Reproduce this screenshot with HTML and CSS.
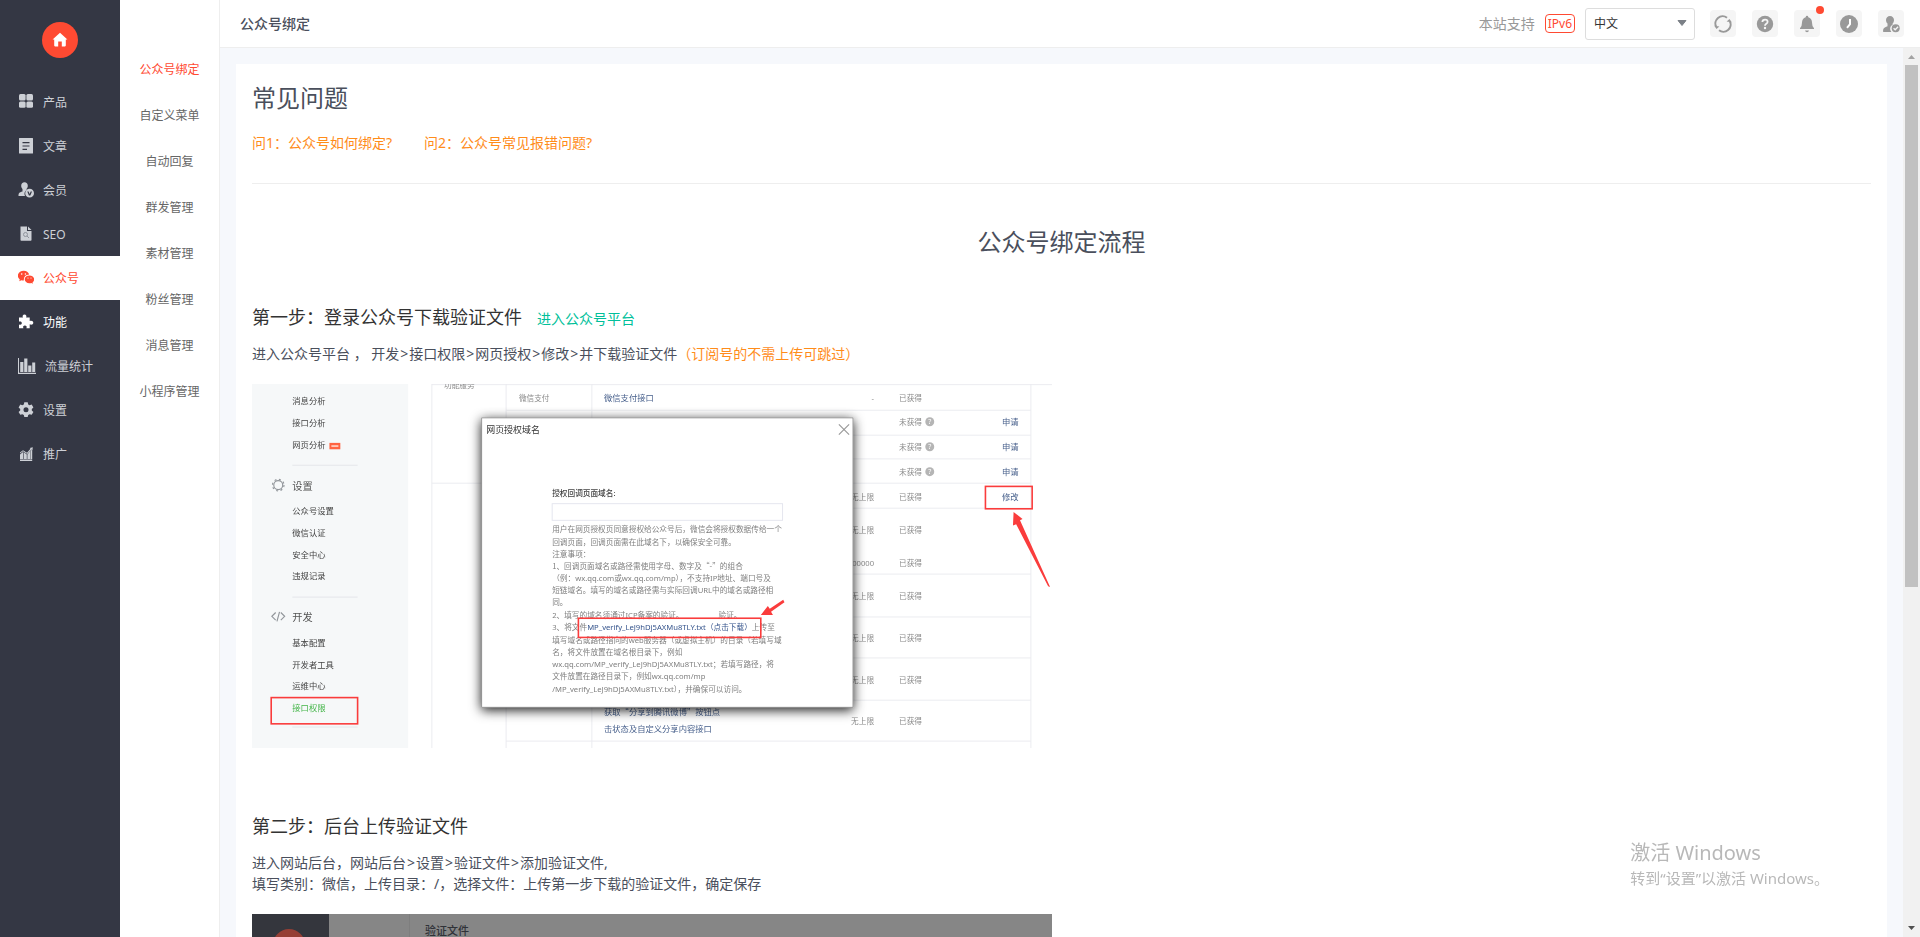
FILE: index.html
```html
<!DOCTYPE html>
<html lang="zh-CN">
<head>
<meta charset="utf-8">
<title>公众号绑定</title>
<link rel="stylesheet" href="styles.css">
</head>
<body>
<div class="app">
  <nav class="sidebar" aria-label="主导航">
    <a class="home" href="#" aria-label="首页">
      <svg width="16" height="16" viewBox="0 0 16 16" fill="currentColor"><path d="M8 .8 15.4 7.600H13.800V13.600q0 .8-.8.8H9.800V9.600H6.200V14.400H3q-.8 0-.8-.8V7.600H.6z"/></svg>
    </a>
    <ul class="menu">
      <li><a class="menu-item" href="#"><svg class="menu-icon" viewBox="0 0 16 16" fill="currentColor"><rect x="1" y="0" width="6.600" height="6.400" rx="1.500"/><rect x="8.400" y="0" width="6.600" height="6.400" rx="1.500"/><rect x="1" y="7.400" width="6.600" height="6.400" rx="1.500"/><rect x="8.400" y="7.400" width="6.600" height="6.400" rx="1.500"/></svg><span>产品</span></a></li>
      <li><a class="menu-item" href="#"><svg class="menu-icon" viewBox="0 0 16 16" fill="currentColor"><path fill-rule="evenodd" d="M1.500 0h13q.5 0 .5.500v14.500q0 .5-.5.500h-13q-.5 0-.5-.5V.5q0-.5.500-.5zM4.500 4v1.200h7V4zM4.500 7.400v1.200h7V7.400zM4.500 10.800V12h4.500v-1.200z"/></svg><span>文章</span></a></li>
      <li><a class="menu-item" href="#"><svg class="menu-icon" viewBox="0 0 16 16" fill="currentColor"><path d="M6.500.2c2 0 3.300 1.500 3.300 3.500 0 1.300-.5 2.200-1.200 3v1.200A5 5 0 0 0 7 14H.5c0-3 .6-3.600 4-4.500V6.900C3.700 6 3.200 5 3.200 3.700 3.200 1.700 4.500.2 6.500.2z"/><path fill-rule="evenodd" d="M11.600 6.800a4.400 4.400 0 1 1 0 8.800 4.400 4.400 0 0 1 0-8.800zM9.300 9.400l1.600 4h1.400l1.700-4h-1.300l-1.100 2.700-1-2.700z"/></svg><span>会员</span></a></li>
      <li><a class="menu-item" href="#"><svg class="menu-icon" viewBox="0 0 16 16"><path fill="currentColor" d="M2.500.500h6.500v4.500h4.500V14q0 .8-.8.800H3.300q-.8 0-.8-.8z"/><path fill="currentColor" d="M10 .500 13.500 4h-3.500z"/><circle cx="7.500" cy="8.500" r="2" fill="none" stroke="#8f939c"/><path d="m9 10 2 2" stroke="#8f939c"/></svg><span>SEO</span></a></li>
      <li><a class="menu-item is-current" href="#" aria-current="page"><svg class="menu-icon" viewBox="0 0 16 16"><path fill="currentColor" d="M5.800.8C2.400.8-.2 2.900-.2 5.700c0 1.500.8 2.800 2 3.700l-.6 1.900 2.200-1.100q1.100.4 2.400.4Q5.500 5 11.200 4.600C10.500 2.400 8.400.8 5.800.8z"/><path fill="currentColor" d="M11.500 5.400c-2.800 0-4.800 1.700-4.800 3.900s2 4 4.800 4q1 0 1.800-.3l1.600.8-.4-1.400c1.100-.8 1.700-1.900 1.700-3.100 0-2.200-2-3.900-4.700-3.900z"/><circle cx="3.700" cy="4" r=".8" fill="#fff"/><circle cx="7.400" cy="4" r=".8" fill="#fff"/><circle cx="10" cy="8" r=".6" fill="#fff"/><circle cx="13" cy="8" r=".6" fill="#fff"/></svg><span>公众号</span></a></li>
      <li><a class="menu-item is-bright" href="#"><svg class="menu-icon" viewBox="0 0 16 16" fill="currentColor"><path d="M5 3.600C4 1.900 5 .5 6.500.5S9 1.900 8.100 3.600h3.600v3.500c1.800-1 3.600 0 3.600 1.600s-1.800 2.600-3.600 1.600v4H8.400c.8-1.800 0-2.800-1.500-2.800s-2.300 1-1.500 2.800H1V10.500c1.800.7 2.800 0 2.800-1.400S2.800 7 1 7.600v-4z"/></svg><span>功能</span></a></li>
      <li><a class="menu-item" href="#"><svg class="menu-icon is-wide" viewBox="0 0 18 16" fill="currentColor"><path d="M0 0h1v14.800h17V16H0z"/><path d="M2.200 4h3.200v10H2.200zM6.200.6h3.200V14H6.200zM10.200 7.500h3.200V14h-3.200zM14.200 4.600h3V14h-3z"/></svg><span>流量统计</span></a></li>
      <li><a class="menu-item" href="#"><svg class="menu-icon" viewBox="0 0 16 16" fill="currentColor"><path fill-rule="evenodd" d="M6.300.300h3.400l.5 2.100 1.400.8 2.100-.6 1.700 2.900L13.800 7v1.400l1.600 1.500-1.700 2.900-2.100-.6-1.400.8-.5 2.100H6.300l-.5-2.100-1.400-.8-2.100.6L.6 9.900 2.200 8.400V7L.6 5.500l1.700-2.900 2.100.6 1.400-.8zM8 5.200a2.500 2.500 0 1 0 0 5 2.500 2.500 0 0 0 0-5z"/></svg><span>设置</span></a></li>
      <li><a class="menu-item" href="#"><svg class="menu-icon" viewBox="0 0 16 16" fill="currentColor"><path d="M2 8.500 5 6v7H2zM5.600 6 8.800 8.500V13H5.600zM9.400 8.500 12.600 4.500V13H9.400zM13 4.500l1.200-1V13H13zM2 13.600h12.200V15H2z"/><path d="m2 6.500 3-2.200 4 2.500L12.500 2.800 11.800 2l3-.8-.4 3-.9-.7L9.300 8 5 5.300 2 7.400z"/></svg><span>推广</span></a></li>
    </ul>
  </nav>

  <nav class="submenu" aria-label="公众号">
    <a class="submenu-item is-current" href="#" aria-current="page">公众号绑定</a>
    <a class="submenu-item" href="#">自定义菜单</a>
    <a class="submenu-item" href="#">自动回复</a>
    <a class="submenu-item" href="#">群发管理</a>
    <a class="submenu-item" href="#">素材管理</a>
    <a class="submenu-item" href="#">粉丝管理</a>
    <a class="submenu-item" href="#">消息管理</a>
    <a class="submenu-item" href="#">小程序管理</a>
  </nav>

  <div class="main">
    <header class="topbar">
      <h1 class="page-title">公众号绑定</h1>
      <div class="tools">
        <span class="support">本站支持</span>
        <span class="ipv6">IPv6</span>
        <div class="lang">
          <select class="lang-select" aria-label="语言"><option>中文</option></select>
          <svg class="lang-arrow" width="10" height="6" viewBox="0 0 10 6"><path d="M1 .5h8L5 5.500z" fill="#7b8087" stroke="#7b8087" stroke-linejoin="round"/></svg>
        </div>
        <div class="buttons">
          <button class="tool" type="button" aria-label="刷新"><svg width="18" height="18" viewBox="0 0 18 18" fill="none" stroke="currentColor" stroke-width="2"><path d="M13 2.800A7.200 7.200 0 0 0 2.200 11.800M5 15.200A7.200 7.200 0 0 0 15.800 6.200"/><path d="M.3 10.800 2.500 14 5.400 11.600zM17.700 7.200 15.500 4 12.600 6.400z" fill="currentColor" stroke="none"/></svg></button>
          <button class="tool" type="button" aria-label="帮助"><svg width="18" height="18" viewBox="0 0 18 18"><circle cx="9" cy="9" r="8.200" fill="currentColor"/><path d="M6.400 7q0-2.400 2.700-2.400 2.500 0 2.500 2.200 0 1.200-1.300 2T9 10.700" fill="none" stroke="#f5f5f5" stroke-width="1.800"/><circle cx="9" cy="13" r="1.200" fill="#f5f5f5"/></svg></button>
          <button class="tool" type="button" aria-label="通知"><svg width="18" height="18" viewBox="0 0 18 18" fill="currentColor"><path d="M9 .8q1.200 0 1.300 1.400Q14 3.400 14 7.500q0 4.200 2 5.700v.8H2v-.8q2-1.500 2-5.700 0-4.100 3.700-5.300Q7.800.8 9 .8zM7 15.400h4q-.4 1.800-2 1.800t-2-1.800z"/></svg><span class="dot"></span></button>
          <button class="tool" type="button" aria-label="历史"><svg width="18" height="18" viewBox="0 0 18 18"><circle cx="9" cy="9" r="9" fill="currentColor"/><path d="M10 4v5.200L7 12.800" fill="none" stroke="#fff" stroke-width="2"/></svg></button>
          <button class="tool" type="button" aria-label="账户"><svg width="18" height="18" viewBox="0 0 18 18"><path fill="currentColor" d="M8 1c2.400 0 4 1.700 4 4 0 1.600-.6 2.700-1.400 3.600v1.100A4.600 4.600 0 0 0 9.400 17H1.200c-.5-3.700.8-4.600 4.300-5.800V8.600C4.600 7.700 4 6.600 4 5c0-2.300 1.600-4 4-4z"/><circle cx="13.700" cy="13.200" r="4" fill="currentColor"/><path d="m11.600 13.200 1.600 1.600 2.900-3" fill="none" stroke="#f5f5f5" stroke-width="1.300"/></svg></button>
        </div>
      </div>
    </header>

    <div class="viewport">
      <main class="scroll-area">
        <section class="card">
          <h2 class="faq-title">常见问题</h2>
          <div class="faq-links">
            <a href="#">问1：公众号如何绑定?</a>
            <a href="#">问2：公众号常见报错问题?</a>
          </div>
          <hr class="rule">
          <h2 class="flow-title">公众号绑定流程</h2>

          <h3 class="step-title"><span>第一步：登录公众号下载验证文件</span><a href="#">进入公众号平台</a></h3>
          <p class="step-text">进入公众号平台 ， 开发<span class="sep">&gt;</span>接口权限<span class="sep">&gt;</span>网页授权<span class="sep">&gt;</span>修改<span class="sep">&gt;</span>并下载验证文件<span class="note">（订阅号的不需上传可跳过）</span></p>
          <svg class="figure is-soft" viewBox="0 0 1250 569" role="img" aria-label="接口权限页面示例">
            <defs><filter id="shade" x="-10%" y="-10%" width="120%" height="125%"><feDropShadow dx="0" dy="4" stdDeviation="9" flood-color="#000" flood-opacity=".9"/></filter></defs>
            <rect width="1250" height="569" fill="#fff"/>
            <rect width="244" height="569" fill="#f6f8f9"/>
            <g stroke="#e4e6e9" stroke-width="1.500"><path d="M63 127h102M63 333h102M63 536h102"/></g>
            <g class="fig-nav">
              <text x="63" y="32">消息分析</text><text x="63" y="66">接口分析</text><text x="63" y="100">网页分析</text>
              <text x="63" y="203">公众号设置</text><text x="63" y="238">微信认证</text><text x="63" y="272">安全中心</text><text x="63" y="305">违规记录</text>
              <text x="63" y="410">基本配置</text><text x="63" y="444">开发者工具</text><text x="63" y="477">运维中心</text><text class="fig-green" x="63" y="511">接口权限</text>
            </g>
            <rect x="121" y="92" width="17" height="10" fill="#ff6240"/><path d="M124 97h11" stroke="#ffc5b6" stroke-width="3"/>
            <g class="fig-head"><text x="63" y="165">设置</text><text x="63" y="370">开发</text></g>
            <g fill="none" stroke="#92969b" stroke-width="1.800"><circle cx="41" cy="158" r="7"/><circle cx="41" cy="158" r="9" stroke-dasharray="3 4.070"/><path d="m37 357-6 6 6 6M45 357l6 6-6 6M43 356l-4 15"/></g>
            <g fill="none" stroke="#eaebef" stroke-width="1.500">
              <path d="M281 1h969M281 0v569M397 0v569M531 0v569M1217 0v569M281 155h116"/>
              <path d="M397 41h820M531 80h686M531 117h686M531 155h686M531 194h686M531 297h686M531 364h686M531 428h686M397 494h820M397 558h820"/>
            </g>
            <g class="fig-grey">
              <text x="300" y="7">功能服务</text><text x="417" y="26">微信支付</text>
              <text x="968" y="26">-</text>
              <text x="1011" y="26">已获得</text><text x="1011" y="64">未获得</text><text x="1011" y="103">未获得</text><text x="1011" y="142">未获得</text><text x="1011" y="181">已获得</text><text x="1011" y="233">已获得</text><text x="1011" y="284">已获得</text><text x="1011" y="336">已获得</text><text x="1011" y="402">已获得</text><text x="1011" y="467">已获得</text><text x="1011" y="532">已获得</text>
            </g>
            <g class="fig-grey" text-anchor="end"><text x="972" y="181">无上限</text><text x="972" y="233">无上限</text><text x="972" y="284">1000000</text><text x="972" y="336">无上限</text><text x="972" y="402">无上限</text><text x="972" y="467">无上限</text><text x="972" y="532">无上限</text></g>
            <g fill="#b5b5b5"><circle cx="1059" cy="59" r="7"/><circle cx="1059" cy="98" r="7"/><circle cx="1059" cy="137" r="7"/></g>
            <g class="fig-mark" text-anchor="middle"><text x="1059" y="63">?</text><text x="1059" y="102">?</text><text x="1059" y="141">?</text></g>
            <g class="fig-blue">
              <text x="550" y="26">微信支付接口</text><text x="1172" y="64">申请</text><text x="1172" y="103">申请</text><text x="1172" y="142">申请</text><text x="1172" y="181">修改</text>
              <text class="fig-cjk" x="550" y="517">获取“分享到腾讯微博”按钮点</text><text x="550" y="544">击状态及自定义分享内容接口</text>
            </g>
            <rect x="359" y="53" width="580" height="452" fill="#fff" stroke="#777" filter="url(#shade)"/>
            <text class="fig-title" x="366" y="76">网页授权域名</text>
            <path d="m917 63 16 16M933 63l-16 16" stroke="#999" stroke-width="1.800"/>
            <text class="fig-label" x="469" y="175">授权回调页面域名:</text>
            <rect x="469" y="187" width="360" height="26" fill="none" stroke="#e4e5ee" stroke-width="1.500"/>
            <g class="fig-body">
              <text x="469" y="231">用户在网页授权页同意授权给公众号后，微信会将授权数据传给一个</text>
              <text x="469" y="251">回调页面，回调页面需在此域名下，以确保安全可靠。</text>
              <text x="469" y="270">注意事项：</text>
              <text class="fig-cjk" x="469" y="289">1、回调页面域名或路径需使用字母、数字及“-”的组合</text>
              <text x="469" y="308">（例：wx.qq.com或wx.qq.com/mp），不支持IP地址、端口号及</text>
              <text x="469" y="327">短链域名。填写的域名或路径需与实际回调URL中的域名或路径相</text>
              <text x="469" y="346">同。</text>
              <text x="469" y="365">2、填写的域名须通过ICP备案的验证。</text><text x="729" y="365">验证。</text>
              <text x="469" y="385">3、将文件<tspan class="fig-link">MP_verify_LeJ9hDj5AXMu8TLY.txt（点击下载）</tspan>上传至</text>
              <text x="469" y="404">填写域名或路径指向的web服务器（或虚拟主机）的目录（若填写域</text>
              <text x="469" y="423">名，将文件放置在域名根目录下，例如</text>
              <text x="469" y="442">wx.qq.com/MP_verify_LeJ9hDj5AXMu8TLY.txt；若填写路径，将</text>
              <text x="469" y="461">文件放置在路径目录下，例如wx.qq.com/mp</text>
              <text x="469" y="481">/MP_verify_LeJ9hDj5AXMu8TLY.txt），并确保可以访问。</text>
            </g>
            <g fill="none" stroke="#fa3c3c" stroke-width="2.500"><rect x="30" y="490" width="135" height="41"/><rect x="1146" y="160" width="73" height="35"/><rect x="510" y="366" width="285" height="30"/></g>
            <path fill="#fa3c3c" d="m1190 200 14 11-4 2 47 104-3-1-50-97-5 2zM795 361l11-14 3 4 21-14 2 4-21 15 3 5z"/>
          </svg>

          <h3 class="step-title is-next"><span>第二步：后台上传验证文件</span></h3>
          <p class="step-text">进入网站后台，网站后台<span class="sep">&gt;</span>设置<span class="sep">&gt;</span>验证文件<span class="sep">&gt;</span>添加验证文件,<br>填写类别：微信，上传目录：/，选择文件：上传第一步下载的验证文件，确定保存</p>
          <svg class="figure" viewBox="0 0 800 400" role="img" aria-label="验证文件页面示例">
            <rect width="800" height="400" fill="#868686"/>
            <rect width="77" height="400" fill="#34363d"/>
            <path d="M157.500 0v400" stroke="#7e7e7e"/>
            <circle cx="37" cy="31" r="16" fill="#963f35"/>
            <text class="fig-dark" x="173" y="21">验证文件</text>
          </svg>
        </section>
      </main>
      <div class="scrollbar" aria-hidden="true">
        <svg width="17" height="17" viewBox="0 0 17 17"><path d="M5 11h7L8.500 7z" fill="#a3a3a3"/></svg>
        <div class="track"><div class="thumb"></div></div>
        <svg width="17" height="17" viewBox="0 0 17 17"><path d="M5 6h7l-3.500 4z" fill="#505050"/></svg>
      </div>
    </div>
  </div>
</div>
<div class="watermark"><p class="watermark-title">激活 Windows</p><p class="watermark-text">转到“设置”以激活 Windows。</p></div>
</body>
</html>
```
FILE: styles.css
```css
* { box-sizing: border-box; }
body {
  margin: 0;
  font: 14px/21px "Noto Sans", "Noto Sans CJK SC", sans-serif;
  color: #4a4f5c;
  background: #f6f8fc;
}
h1, h2, h3, p, ul { margin: 0; padding: 0; font-weight: 400; }
ul { list-style: none; }
a { color: inherit; text-decoration: none; }
svg { display: block; }

.app { display: flex; height: 100vh; }

.sidebar { flex: none; width: 120px; background: #343744; color: #cdd0d6; }
.home {
  display: flex;
  align-items: center;
  justify-content: center;
  width: 36px;
  height: 36px;
  margin: 22px auto;
  border-radius: 50%;
  background: #ff4a32;
  color: #fff;
}
.menu-item {
  display: flex;
  align-items: center;
  gap: 9px;
  height: 44px;
  padding-left: 18px;
  font-size: 12px;
}
.menu-icon { width: 16px; height: 16px; }
.menu-icon.is-wide { width: 18px; }
.menu-item.is-current { background: #fff; color: #ff4a32; }
.menu-item.is-bright { color: #fff; }

.submenu {
  flex: none;
  width: 100px;
  padding-top: 47px;
  border-right: 1px solid #eee;
  background: #fff;
  color: #666;
  font-size: 12px;
  line-height: 46px;
  text-align: center;
}
.submenu-item { display: block; }
.submenu-item.is-current { color: #ff4a32; }

.main { flex: 1; min-width: 0; display: flex; flex-direction: column; }
.topbar {
  flex: none;
  display: flex;
  align-items: center;
  justify-content: space-between;
  height: 48px;
  padding: 0 16px 0 20px;
  border-bottom: 1px solid #eee;
  background: #fff;
}
.page-title { font-size: 14px; font-weight: 500; }
.tools { display: flex; align-items: center; gap: 10px; }
.support { color: #999; }
.ipv6 {
  padding: 0 2px;
  border: 1px solid #ff4a32;
  border-radius: 4px;
  color: #ff4a32;
  font-size: 12px;
  line-height: 17px;
}
.lang { position: relative; }
.lang-select {
  display: block;
  width: 110px;
  height: 32px;
  padding: 0 8px;
  border: 1px solid #ddd;
  border-radius: 3px;
  background: #fff;
  color: #333;
  font: inherit;
  font-size: 12px;
  appearance: none;
}
.lang-arrow { position: absolute; right: 8px; top: 12px; pointer-events: none; }
.buttons { display: flex; gap: 16px; margin-left: 5px; }
.tool {
  position: relative;
  display: flex;
  align-items: center;
  justify-content: center;
  width: 26px;
  height: 27px;
  padding: 0;
  border: 0;
  border-radius: 4px;
  background: #f5f5f5;
  color: #999;
}
.dot {
  position: absolute;
  top: -4px;
  right: -4px;
  width: 8px;
  height: 8px;
  border-radius: 50%;
  background: #ff4a32;
}

.viewport { flex: 1; min-height: 0; display: flex; }
.scroll-area { flex: 1; min-width: 0; padding: 16px; overflow-y: auto; scrollbar-width: none; }
.card { padding: 16px; background: #fff; }
.faq-title { font-size: 24px; line-height: 36px; }
.faq-links { display: flex; gap: 32px; margin: 16px 0 29px; color: #ff8c1a; line-height: 22px; }
.rule { margin: 0 0 40px; border: 0; border-top: 1px solid #eee; }
.flow-title { margin-bottom: 43px; font-size: 24px; line-height: 36px; text-align: center; }
.step-title {
  display: flex;
  align-items: baseline;
  gap: 15px;
  margin-bottom: 12px;
  color: #333;
  font-size: 18px;
  line-height: 28px;
}
.step-title a { color: #00bf9a; font-size: 14px; line-height: 20px; }
.step-title.is-next { margin-top: 64px; }
.step-text { margin-bottom: 20px; }
.sep { margin: 0 1px; }
.note { color: #ff8c1a; }
.figure { width: 800px; max-width: 100%; }
.figure.is-soft { filter: blur(0.3px); }

.fig-nav { font-size: 13px; fill: #444; }
.fig-green { fill: #44b549; }
.fig-head { font-size: 16px; fill: #555; }
.fig-grey { font-size: 12px; fill: #8a8a8a; }
.fig-mark { font-size: 11px; fill: #fff; }
.fig-blue { font-size: 13px; fill: #465f8b; }
.fig-title { font-size: 14px; fill: #333; }
.fig-label { font-size: 12px; font-weight: 500; fill: #444; }
.fig-body { font-size: 12px; fill: #808080; }
.fig-link { fill: #35548c; }
.fig-cjk { font-family: "Noto Sans CJK SC", sans-serif; }
.fig-dark { font-size: 11px; font-weight: 500; fill: #303238; }

.scrollbar { flex: none; display: flex; flex-direction: column; width: 17px; background: #f1f1f1; }
.track { flex: 1; padding: 0 2px; }
.thumb { height: 61%; background: #c1c1c1; }

.watermark { position: fixed; right: 91px; bottom: 48px; color: #b8b8b8; pointer-events: none; }
.watermark-title { font-size: 20px; line-height: 28px; }
.watermark-text { font-size: 15px; line-height: 22px; }
```
